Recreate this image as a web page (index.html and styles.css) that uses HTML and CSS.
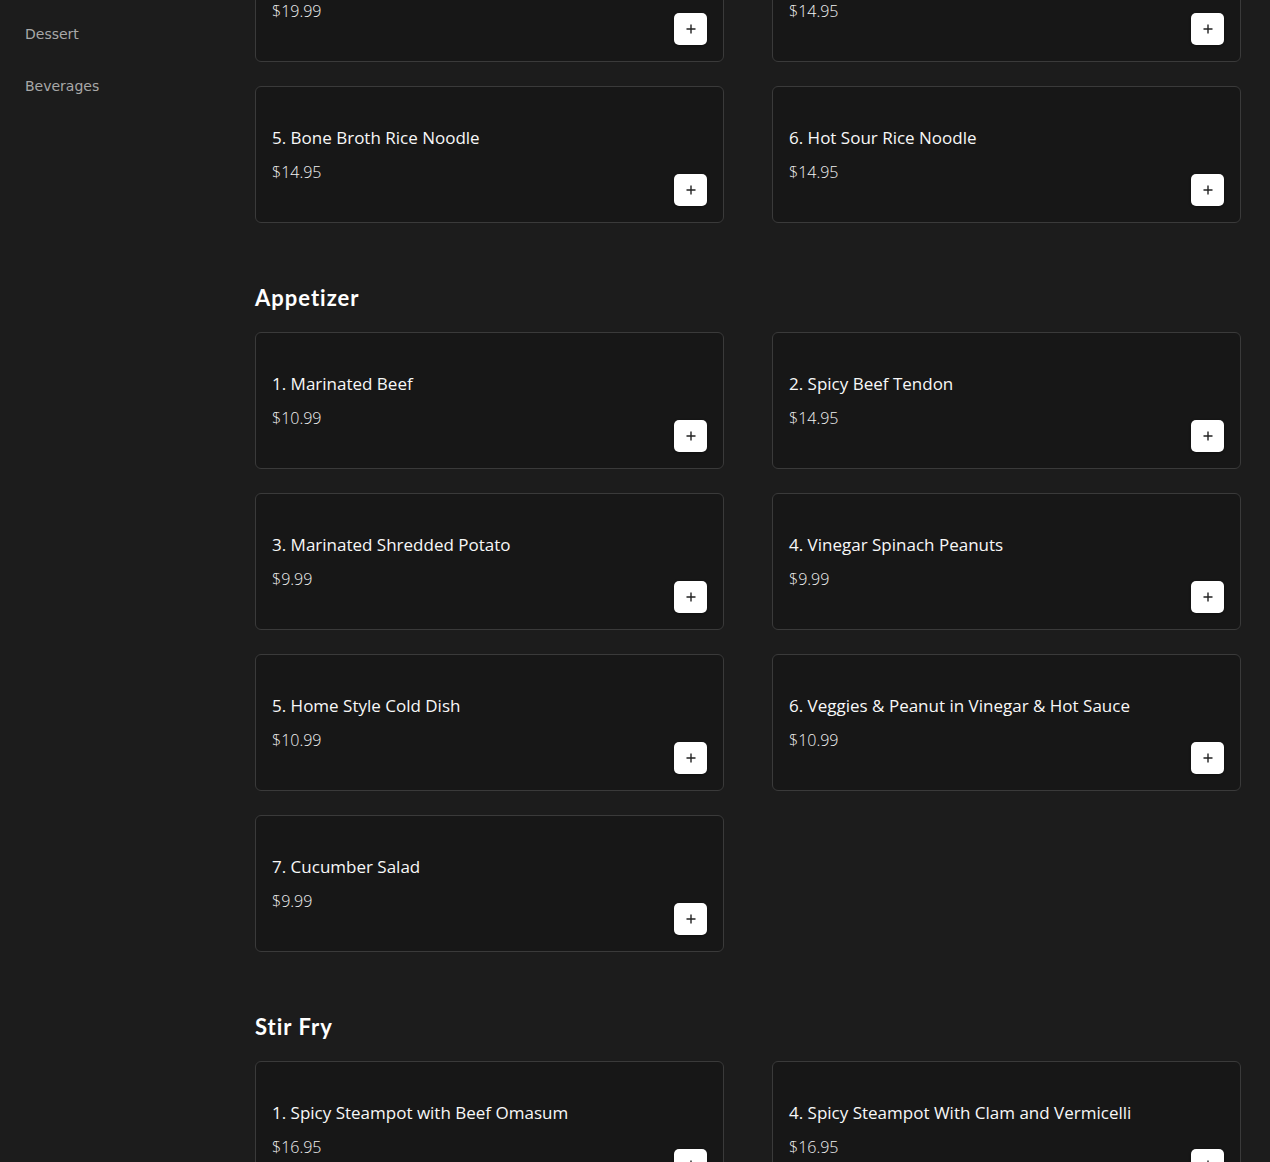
FILE: index.html
```html
<!DOCTYPE html>
<html>
<head>
<meta charset="utf-8">
<link rel="stylesheet" href="styles.css">
</head>
<body>
<div class="page">
  <aside class="sidebar">
    <a class="side-link">Dessert</a>
    <a class="side-link">Beverages</a>
  </aside>
  <main class="main">
    <section class="section">
      <div class="grid">
        <div class="card"><div class="info"><div class="title">3. Noodle</div><div class="price">$19.99</div></div><button class="add"><svg viewBox="0 0 10 10" width="10" height="10"><path d="M5 0.5V9.5M0.5 5H9.5" stroke="#222" stroke-width="1.4" fill="none"/></svg></button></div>
        <div class="card"><div class="info"><div class="title">4. Noodle</div><div class="price">$14.95</div></div><button class="add"><svg viewBox="0 0 10 10" width="10" height="10"><path d="M5 0.5V9.5M0.5 5H9.5" stroke="#222" stroke-width="1.4" fill="none"/></svg></button></div>
        <div class="card"><div class="info"><div class="title">5. Bone Broth Rice Noodle</div><div class="price">$14.95</div></div><button class="add"><svg viewBox="0 0 10 10" width="10" height="10"><path d="M5 0.5V9.5M0.5 5H9.5" stroke="#222" stroke-width="1.4" fill="none"/></svg></button></div>
        <div class="card"><div class="info"><div class="title">6. Hot Sour Rice Noodle</div><div class="price">$14.95</div></div><button class="add"><svg viewBox="0 0 10 10" width="10" height="10"><path d="M5 0.5V9.5M0.5 5H9.5" stroke="#222" stroke-width="1.4" fill="none"/></svg></button></div>
      </div>
    </section>
    <section class="section">
      <h2 class="heading">Appetizer</h2>
      <div class="grid">
        <div class="card"><div class="info"><div class="title">1. Marinated Beef</div><div class="price">$10.99</div></div><button class="add"><svg viewBox="0 0 10 10" width="10" height="10"><path d="M5 0.5V9.5M0.5 5H9.5" stroke="#222" stroke-width="1.4" fill="none"/></svg></button></div>
        <div class="card"><div class="info"><div class="title">2. Spicy Beef Tendon</div><div class="price">$14.95</div></div><button class="add"><svg viewBox="0 0 10 10" width="10" height="10"><path d="M5 0.5V9.5M0.5 5H9.5" stroke="#222" stroke-width="1.4" fill="none"/></svg></button></div>
        <div class="card"><div class="info"><div class="title">3. Marinated Shredded Potato</div><div class="price">$9.99</div></div><button class="add"><svg viewBox="0 0 10 10" width="10" height="10"><path d="M5 0.5V9.5M0.5 5H9.5" stroke="#222" stroke-width="1.4" fill="none"/></svg></button></div>
        <div class="card"><div class="info"><div class="title">4. Vinegar Spinach Peanuts</div><div class="price">$9.99</div></div><button class="add"><svg viewBox="0 0 10 10" width="10" height="10"><path d="M5 0.5V9.5M0.5 5H9.5" stroke="#222" stroke-width="1.4" fill="none"/></svg></button></div>
        <div class="card"><div class="info"><div class="title">5. Home Style Cold Dish</div><div class="price">$10.99</div></div><button class="add"><svg viewBox="0 0 10 10" width="10" height="10"><path d="M5 0.5V9.5M0.5 5H9.5" stroke="#222" stroke-width="1.4" fill="none"/></svg></button></div>
        <div class="card"><div class="info"><div class="title">6. Veggies &amp; Peanut in Vinegar &amp; Hot Sauce</div><div class="price">$10.99</div></div><button class="add"><svg viewBox="0 0 10 10" width="10" height="10"><path d="M5 0.5V9.5M0.5 5H9.5" stroke="#222" stroke-width="1.4" fill="none"/></svg></button></div>
        <div class="card"><div class="info"><div class="title">7. Cucumber Salad</div><div class="price">$9.99</div></div><button class="add"><svg viewBox="0 0 10 10" width="10" height="10"><path d="M5 0.5V9.5M0.5 5H9.5" stroke="#222" stroke-width="1.4" fill="none"/></svg></button></div>
      </div>
    </section>
    <section class="section">
      <h2 class="heading">Stir Fry</h2>
      <div class="grid">
        <div class="card"><div class="info"><div class="title">1. Spicy Steampot with Beef Omasum</div><div class="price">$16.95</div></div><button class="add"><svg viewBox="0 0 10 10" width="10" height="10"><path d="M5 0.5V9.5M0.5 5H9.5" stroke="#222" stroke-width="1.4" fill="none"/></svg></button></div>
        <div class="card"><div class="info"><div class="title">4. Spicy Steampot With Clam and Vermicelli</div><div class="price">$16.95</div></div><button class="add"><svg viewBox="0 0 10 10" width="10" height="10"><path d="M5 0.5V9.5M0.5 5H9.5" stroke="#222" stroke-width="1.4" fill="none"/></svg></button></div>
      </div>
    </section>
  </main>
</div>
</body>
</html>
```

FILE: styles.css
```css
html, body {
  margin: 0;
  padding: 0;
  background: #1c1c1c;
  overflow: hidden;
}
.page {
  display: flex;
  align-items: flex-start;
  min-height: 1162px;
}
.sidebar {
  width: 255px;
  flex: none;
  box-sizing: border-box;
  padding: 24px 0 0 25px;
  display: flex;
  flex-direction: column;
  gap: 32px;
}
.side-link {
  font-family: "DejaVu Sans", sans-serif;
  font-size: 14px;
  line-height: 20px;
  color: #a8a8a8;
}
.main {
  flex: 1;
  padding-right: 29px;
  margin-top: -75px;
}
.section {
  margin-bottom: 62px;
}
.heading {
  margin: 0 0 21px 0;
  font-family: "Lato", sans-serif;
  font-weight: 700;
  font-size: 22px;
  letter-spacing: 1px;
  line-height: 26px;
  color: #ffffff;
}
.grid {
  display: grid;
  grid-template-columns: 1fr 1fr;
  column-gap: 48px;
  row-gap: 24px;
}
.card {
  background: #171717;
  border: 1px solid #3a3a3a;
  border-radius: 6px;
  padding: 16px;
  display: flex;
  justify-content: space-between;
}
.info {
  padding: 23px 0 22px;
}
.title {
  font-family: "Open Sans", sans-serif;
  font-weight: 500;
  font-size: 17px;
  line-height: 24px;
  color: #f8f8f8;
}
.price {
  margin-top: 10px;
  font-family: "Open Sans", sans-serif;
  font-weight: 300;
  font-size: 16px;
  line-height: 24px;
  color: #f2f2f2;
}
.add {
  align-self: flex-end;
  width: 33px;
  height: 32px;
  padding: 0;
  border: none;
  border-radius: 5px;
  background: #ffffff;
  display: flex;
  align-items: center;
  justify-content: center;
  box-shadow: 0 1px 3px rgba(0,0,0,0.4);
}
.add svg {
  display: block;
}
```
